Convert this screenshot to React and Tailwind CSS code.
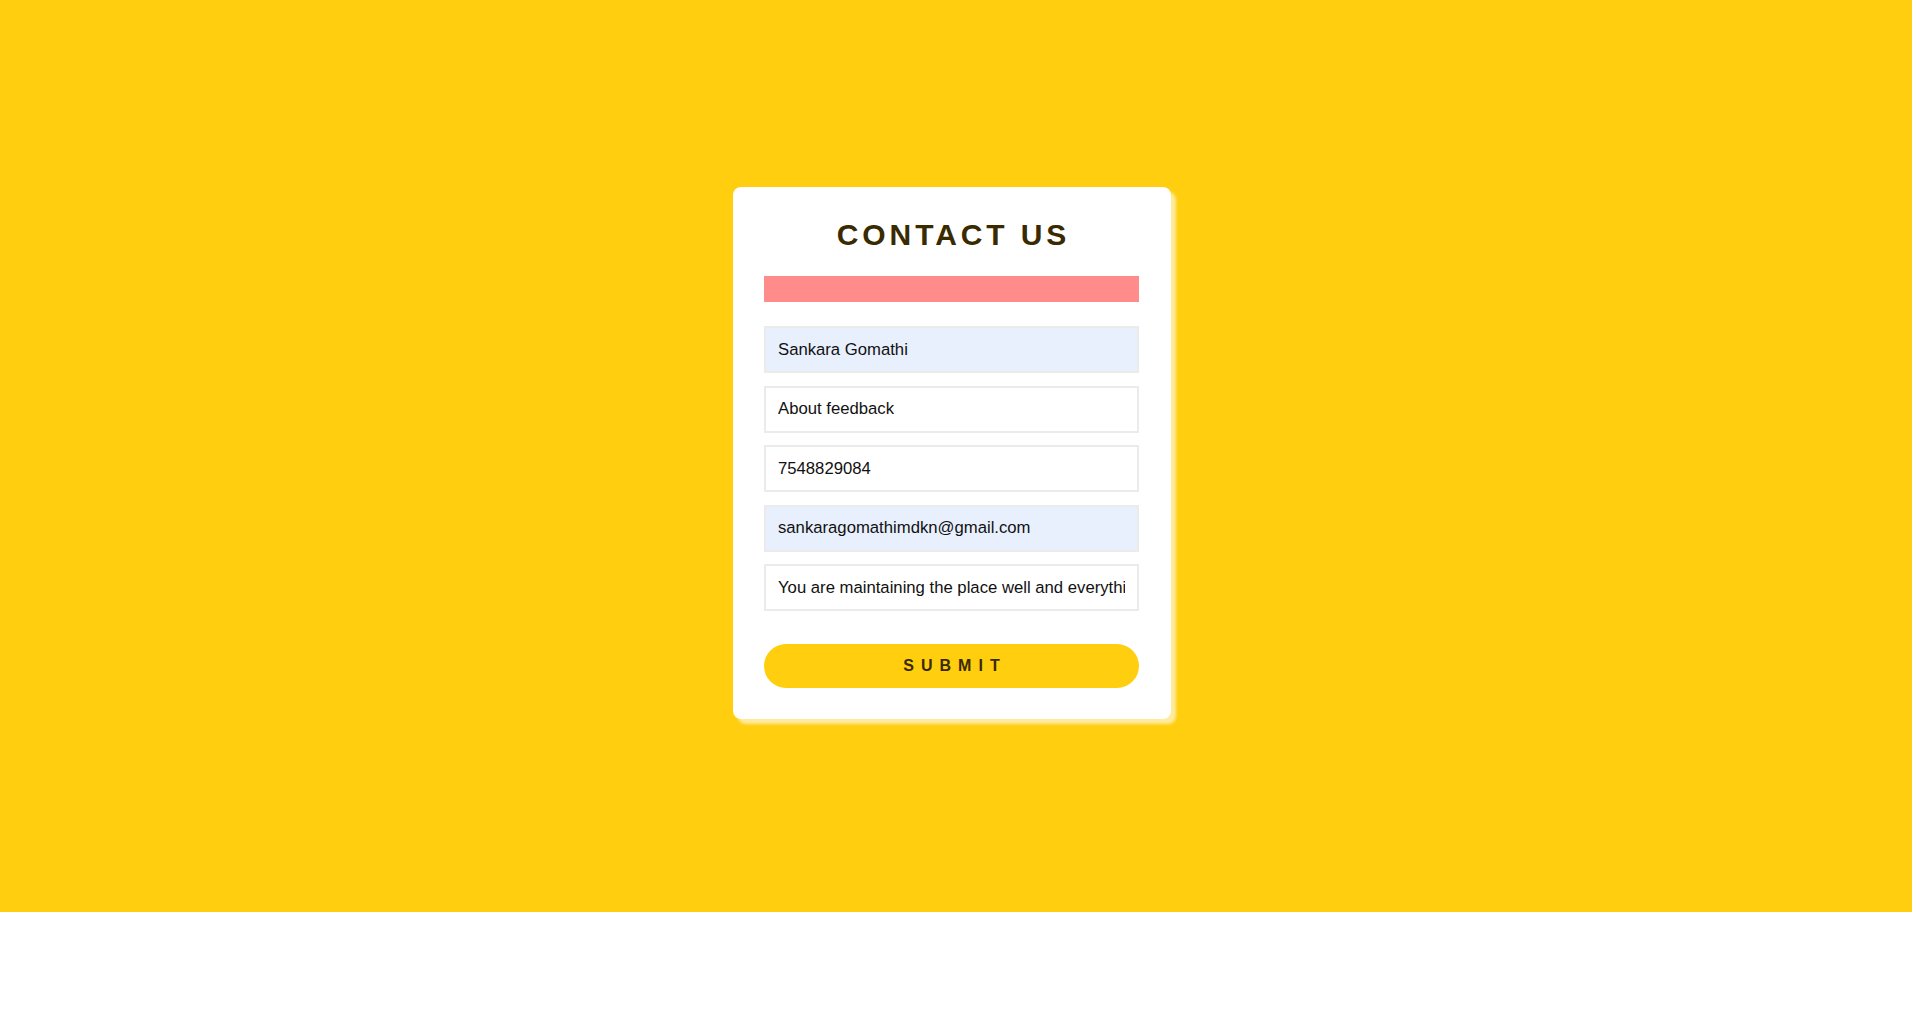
const fields = [
  { value: 'Sankara Gomathi', filled: true },
  { value: 'About feedback', filled: false },
  { value: '7548829084', filled: false },
  { value: 'sankaragomathimdkn@gmail.com', filled: true },
  { value: 'You are maintaining the place well and everything is neat', filled: false },
]

const App = () => {
  return (
    <div className="bg-white w-full h-[1028px] font-['Liberation_Sans',Arial,sans-serif]">
      {/* Yellow section */}
      <div className="w-[1912px] h-[912px] bg-[#ffce0f] flex items-center justify-center pr-[8px] pb-[6px]">
        <div className="w-[438px] bg-white rounded-lg px-[31px] pt-[31px] pb-[31px] shadow-[5px_5px_3px_rgba(255,255,255,0.6)]">
          <h1 className="text-[30px] leading-[34px] font-bold tracking-[3.9px] text-center text-[#3a2a00] pl-[3px]">
            CONTACT US
          </h1>
          <div className="mt-[24px] h-[26px] w-[375px] bg-[#ff8b8b]"></div>

          <form className="mt-[24px] flex flex-col gap-[12.5px]" onSubmit={e => e.preventDefault()}>
            {fields.map((f, i) => (
              <input
                key={i}
                readOnly
                value={f.value}
                className={`h-[47px] w-[375px] border-2 border-[#ebebeb] px-[12px] text-[16.7px] text-[#111] outline-none ${f.filled ? 'bg-[#e8f0fe]' : 'bg-white'}`}
              />
            ))}
            <button
              type="submit"
              className="mt-[20.5px] h-[44px] w-[375px] rounded-full bg-[#ffce0f] text-[16px] font-bold tracking-[7px] pl-[7px] text-[#3a2a00]"
            >
              SUBMIT
            </button>
          </form>
        </div>
      </div>
    </div>
  )
}

export default App
